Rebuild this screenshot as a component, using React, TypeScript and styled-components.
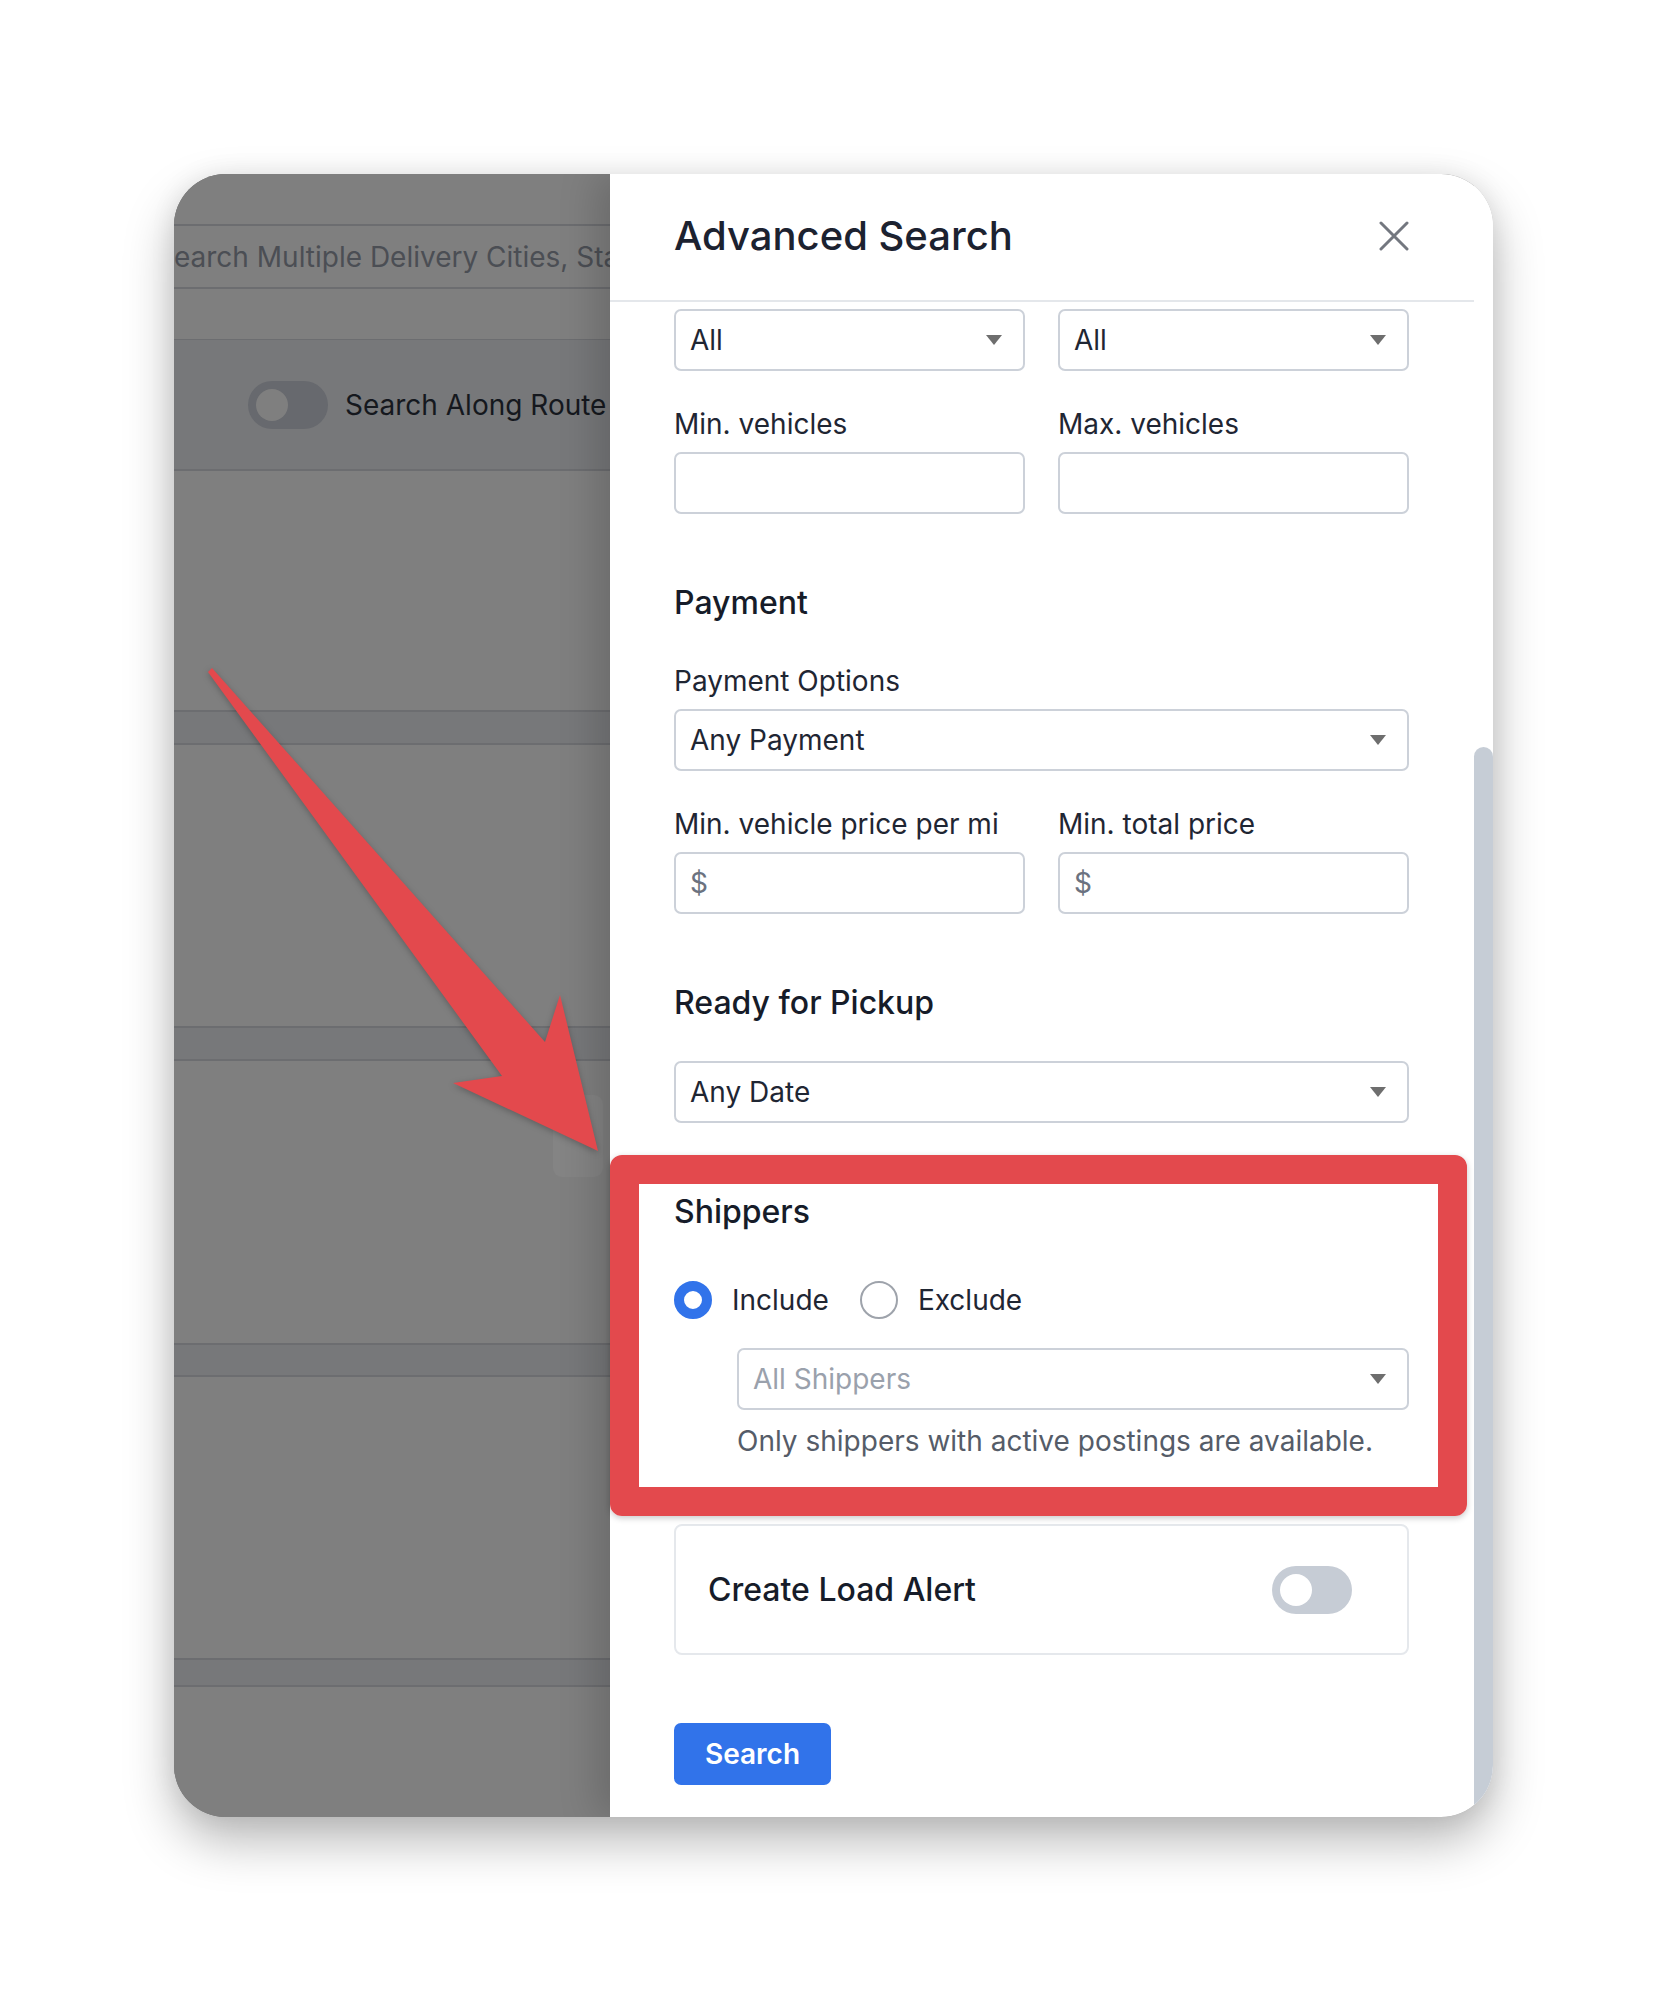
import React from "react";
import styled, { createGlobalStyle } from "styled-components";

const GlobalStyle = createGlobalStyle`
  html, body { margin: 0; padding: 0; background: #ffffff; }
  body { font-family: Inter, "Noto Sans", "Liberation Sans", sans-serif; -webkit-font-smoothing: antialiased; }
  * { box-sizing: border-box; }
`;

const Page = styled.div`
  width: 1668px;
  height: 1992px;
  padding: 174px 0 0 174px;
`;

const Window = styled.div`
  position: relative;
  width: 1319px;
  height: 1643px;
  border-radius: 52px;
  overflow: hidden;
  display: flex;
  background: #7f7f7f;
  box-shadow: 0 24px 50px rgba(0, 0, 0, 0.28), 0 0 26px rgba(0, 0, 0, 0.08);
`;

/* ---------- dimmed page behind the drawer ---------- */

const Backdrop = styled.div`
  width: 436px;
  flex: none;
  display: flex;
  flex-direction: column;
  background: #7f7f7f;
  overflow: hidden;
`;

const Strip = styled.div<{ $h?: number; $band?: boolean; $top?: number; $bottom?: number }>`
  flex: ${(p) => (p.$h ? "none" : "1")};
  height: ${(p) => (p.$h ? `${p.$h}px` : "auto")};
  background: ${(p) => (p.$band ? "#77787a" : "#7f7f7f")};
  border-top: ${(p) => (p.$top ? `${p.$top}px solid #6c6d70` : "none")};
  border-bottom: ${(p) => (p.$bottom ? `${p.$bottom}px solid #6c6d70` : "none")};
`;

const GhostInput = styled(Strip)`
  display: flex;
  align-items: center;
  overflow: hidden;
  white-space: nowrap;
  font-size: 28px;
  line-height: 34px;
  color: #4b4e54;
  text-indent: -18px;
`;

const RouteRow = styled(Strip)`
  display: flex;
  align-items: center;
  gap: 17px;
  padding-left: 74px;
  white-space: nowrap;
  font-size: 28px;
  line-height: 34px;
  color: #15181e;
`;

const HandleRow = styled(Strip)`
  padding: 34px 0 0 379px;
`;

const Handle = styled.div`
  width: 50px;
  height: 82px;
  border-radius: 9px;
  background: #848484;
`;

const Toggle = styled.span<{ $dim?: boolean }>`
  flex: none;
  display: flex;
  align-items: center;
  width: 80px;
  height: 48px;
  padding: 8px;
  border-radius: 24px;
  background: ${(p) => (p.$dim ? "#67696e" : "#c6ccd5")};
`;

const Knob = styled.span<{ $dim?: boolean }>`
  width: 32px;
  height: 32px;
  border-radius: 50%;
  background: ${(p) => (p.$dim ? "#7f7f7f" : "#ffffff")};
`;

/* ---------- drawer ---------- */

const Drawer = styled.div`
  position: relative;
  z-index: 1;
  flex: 1;
  display: flex;
  background: #ffffff;
  box-shadow: -14px 0 36px rgba(0, 0, 0, 0.16);
`;

const DrawerMain = styled.div`
  flex: 1;
  display: flex;
  flex-direction: column;
  min-width: 0;
`;

const ScrollTrack = styled.div`
  width: 19px;
  flex: none;
  display: flex;
  flex-direction: column;
  padding-top: 573px;
  background: #ffffff;
`;

const Thumb = styled.div`
  flex: 1;
  border-radius: 10px 10px 0 0;
  background: #c6cdd6;
`;

const Header = styled.div`
  height: 128px;
  flex: none;
  display: flex;
  align-items: center;
  justify-content: space-between;
  padding: 0 65px 2px 64px;
  border-bottom: 2px solid #e4e7eb;
`;

const Title = styled.h1`
  margin: 0;
  font-size: 40px;
  line-height: 46px;
  font-weight: 500;
  color: #1c2230;
`;

const CloseButton = styled.button`
  display: flex;
  padding: 0;
  border: 0;
  background: none;
  cursor: pointer;
`;

const Body = styled.div`
  display: flex;
  flex-direction: column;
  align-items: flex-start;
  padding: 7px 65px 0 64px;
`;

const Grid2 = styled.div<{ $mt?: number }>`
  width: 100%;
  display: grid;
  grid-template-columns: 1fr 1fr;
  column-gap: 33px;
  margin-top: ${(p) => p.$mt ?? 0}px;
`;

const Field = styled.div<{ $mt?: number }>`
  width: 100%;
  display: flex;
  flex-direction: column;
  gap: 11px;
  margin-top: ${(p) => p.$mt ?? 0}px;
`;

const Label = styled.label`
  font-size: 28px;
  line-height: 34px;
  color: #1f2633;
  white-space: nowrap;
`;

const SectionTitle = styled.h2<{ $mt: number }>`
  margin: ${(p) => p.$mt}px 0 0;
  font-size: 32px;
  line-height: 38px;
  font-weight: 500;
  color: #161c29;
`;

const Control = styled.div<{ $indent?: number; $mt?: number; $muted?: boolean }>`
  align-self: stretch;
  height: 62px;
  display: flex;
  align-items: center;
  justify-content: space-between;
  margin: ${(p) => p.$mt ?? 0}px 0 0 ${(p) => p.$indent ?? 0}px;
  padding: 0 21px 0 14px;
  border: 2px solid #ccd1d9;
  border-radius: 7px;
  background: #ffffff;
  font-size: 28px;
  line-height: 34px;
  color: ${(p) => (p.$muted ? "#9aa1ac" : "#1f2633")};
`;

const Dollar = styled.span`
  color: #6b7280;
`;

const RadioRow = styled.div`
  margin-top: 50px;
  display: flex;
  align-items: center;
  height: 38px;
`;

const RadioOption = styled.label`
  display: flex;
  align-items: center;
  gap: 20px;
  margin-right: 31px;
  font-size: 28px;
  line-height: 34px;
  color: #1f2633;
`;

const RadioDot = styled.span<{ $checked?: boolean }>`
  width: 38px;
  height: 38px;
  border-radius: 50%;
  background: #ffffff;
  border: ${(p) => (p.$checked ? "10.5px solid #3173ea" : "2px solid #9ea3ab")};
`;

const Helper = styled.p`
  margin: 14px 0 0 63px;
  font-size: 28px;
  line-height: 34px;
  color: #555c68;
`;

const AlertCard = styled.div`
  align-self: stretch;
  margin-top: 66px;
  height: 131px;
  display: flex;
  align-items: center;
  justify-content: space-between;
  padding: 0 55px 0 32px;
  border: 2px solid #e5e8ec;
  border-radius: 8px;
`;

const AlertText = styled.span`
  font-size: 32px;
  line-height: 38px;
  font-weight: 500;
  color: #161c29;
`;

const SearchButton = styled.button`
  margin-top: 68px;
  width: 157px;
  height: 62px;
  border: 0;
  border-radius: 7px;
  background: #3173ea;
  color: #ffffff;
  font-family: inherit;
  font-size: 28px;
  font-weight: 600;
  cursor: pointer;
`;

/* ---------- annotation overlay ---------- */

const Highlight = styled.div`
  position: absolute;
  z-index: 3;
  left: 436px;
  top: 981px;
  width: 857px;
  height: 361px;
  border: 29px solid #e3494d;
  border-radius: 12px;
  box-shadow: 0 2px 6px rgba(0, 0, 0, 0.22);
  pointer-events: none;
`;

const ArrowLayer = styled.svg`
  position: absolute;
  z-index: 3;
  left: 0;
  top: 0;
  filter: drop-shadow(0 2px 3px rgba(0, 0, 0, 0.25));
  pointer-events: none;
`;

const Caret = () => (
  <svg width="16" height="10" viewBox="0 0 16 10" aria-hidden>
    <polygon points="0,0 16,0 8,10" fill="#6e6e6e" />
  </svg>
);

const Select = ({
  value,
  indent,
  mt,
  muted,
}: {
  value: string;
  indent?: number;
  mt?: number;
  muted?: boolean;
}) => (
  <Control $indent={indent} $mt={mt} $muted={muted}>
    <span>{value}</span>
    <Caret />
  </Control>
);

export default function App() {
  return (
    <>
      <GlobalStyle />
      <Page>
        <Window>
          <Backdrop>
            <Strip $h={52} $bottom={2} />
            <GhostInput $h={63} $bottom={2}>
              Search Multiple Delivery Cities, States
            </GhostInput>
            <Strip $h={51} $bottom={1} />
            <RouteRow $h={131} $band $bottom={2}>
              <Toggle $dim>
                <Knob $dim />
              </Toggle>
              Search Along Route
            </RouteRow>
            <Strip $h={239} />
            <Strip $h={35} $band $top={2} $bottom={2} />
            <Strip $h={281} />
            <Strip $h={35} $band $top={2} $bottom={2} />
            <HandleRow $h={282}>
              <Handle />
            </HandleRow>
            <Strip $h={34} $band $top={2} $bottom={2} />
            <Strip $h={281} />
            <Strip $h={29} $band $top={2} $bottom={2} />
            <Strip />
          </Backdrop>

          <Drawer>
            <DrawerMain>
              <Header>
                <Title>Advanced Search</Title>
                <CloseButton aria-label="Close">
                  <svg width="30" height="30" viewBox="0 0 30 30">
                    <path d="M2 2 L28 28 M28 2 L2 28" stroke="#73777f" strokeWidth="3" strokeLinecap="round" />
                  </svg>
                </CloseButton>
              </Header>

              <Body>
                <Grid2>
                  <Select value="All" />
                  <Select value="All" />
                </Grid2>

                <Grid2 $mt={36}>
                  <Field>
                    <Label>Min. vehicles</Label>
                    <Control />
                  </Field>
                  <Field>
                    <Label>Max. vehicles</Label>
                    <Control />
                  </Field>
                </Grid2>

                <SectionTitle $mt={70}>Payment</SectionTitle>
                <Field $mt={42}>
                  <Label>Payment Options</Label>
                  <Select value="Any Payment" />
                </Field>

                <Grid2 $mt={36}>
                  <Field>
                    <Label>Min. vehicle price per mi</Label>
                    <Control>
                      <Dollar>$</Dollar>
                    </Control>
                  </Field>
                  <Field>
                    <Label>Min. total price</Label>
                    <Control>
                      <Dollar>$</Dollar>
                    </Control>
                  </Field>
                </Grid2>

                <SectionTitle $mt={70}>Ready for Pickup</SectionTitle>
                <Select value="Any Date" mt={39} />

                <SectionTitle $mt={70}>Shippers</SectionTitle>
                <RadioRow>
                  <RadioOption>
                    <RadioDot $checked />
                    Include
                  </RadioOption>
                  <RadioOption>
                    <RadioDot />
                    Exclude
                  </RadioOption>
                </RadioRow>
                <Select value="All Shippers" indent={63} mt={29} muted />
                <Helper>Only shippers with active postings are available.</Helper>

                <AlertCard>
                  <AlertText>Create Load Alert</AlertText>
                  <Toggle>
                    <Knob />
                  </Toggle>
                </AlertCard>

                <SearchButton>Search</SearchButton>
              </Body>
            </DrawerMain>
            <ScrollTrack>
              <Thumb />
            </ScrollTrack>
          </Drawer>

          <Highlight />
          <ArrowLayer width="460" height="1000" viewBox="0 0 460 1000">
            <polygon
              points="34,498 38,494 371,868 386,821 424,977 279,909 328,902"
              fill="#e3494d"
            />
          </ArrowLayer>
        </Window>
      </Page>
    </>
  );
}
